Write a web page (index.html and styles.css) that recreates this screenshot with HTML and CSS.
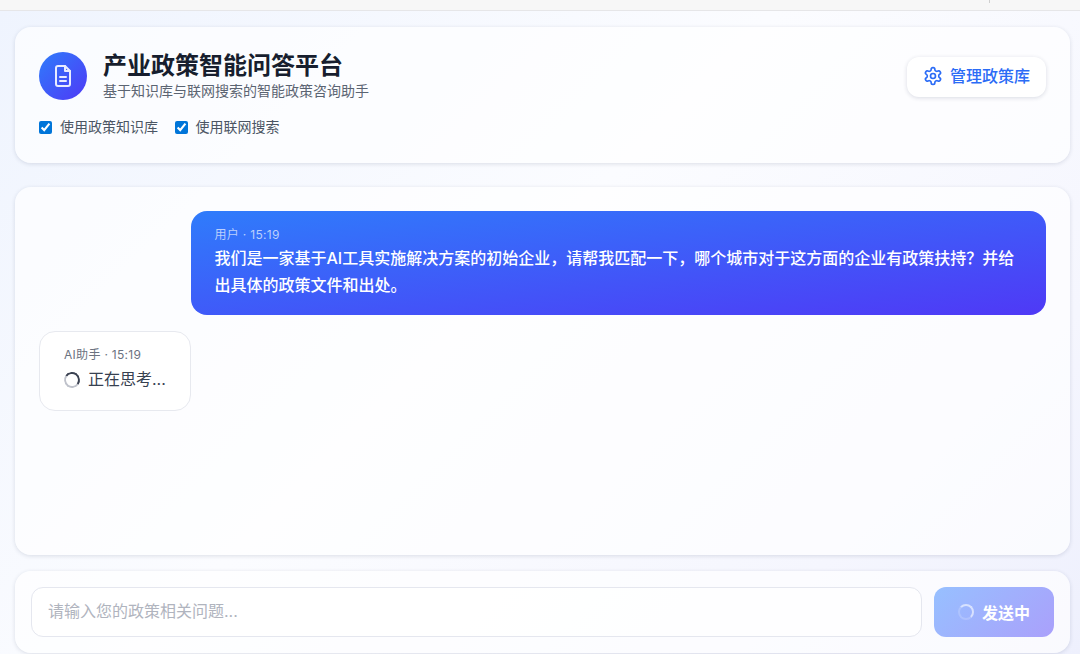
FILE: index.html
```html
<!DOCTYPE html>
<html lang="zh-CN">
<head>
<meta charset="utf-8">
<title>产业政策智能问答平台</title>
<link rel="stylesheet" href="styles.css">
</head>
<body>
<div class="browser-strip"><span class="strip-divider"></span></div>
<main class="page">
  <header class="card header">
    <div class="header-top">
      <div class="brand">
        <div class="logo">
          <svg width="24" height="24" viewBox="0 0 24 24" fill="none" stroke="#e9ecff" stroke-width="2" stroke-linecap="round" stroke-linejoin="round"><path d="M14 2H7a2 2 0 0 0-2 2v16a2 2 0 0 0 2 2h10a2 2 0 0 0 2-2V7z"/><path d="M14 2v5h5"/><path d="M9 13h6"/><path d="M9 17h6"/></svg>
        </div>
        <div>
          <h1 class="title">产业政策智能问答平台</h1>
          <p class="subtitle">基于知识库与联网搜索的智能政策咨询助手</p>
        </div>
      </div>
      <button class="manage-btn" type="button">
        <svg width="20" height="20" viewBox="0 0 24 24" fill="none" stroke="#2b6cf6" stroke-width="2" stroke-linecap="round" stroke-linejoin="round"><path d="M12.22 2h-.44a2 2 0 0 0-2 2v.18a2 2 0 0 1-1 1.73l-.43.25a2 2 0 0 1-2 0l-.15-.08a2 2 0 0 0-2.73.73l-.22.38a2 2 0 0 0 .73 2.73l.15.1a2 2 0 0 1 1 1.72v.51a2 2 0 0 1-1 1.74l-.15.09a2 2 0 0 0-.73 2.73l.22.38a2 2 0 0 0 2.73.73l.15-.08a2 2 0 0 1 2 0l.43.25a2 2 0 0 1 1 1.73V20a2 2 0 0 0 2 2h.44a2 2 0 0 0 2-2v-.18a2 2 0 0 1 1-1.73l.43-.25a2 2 0 0 1 2 0l.15.08a2 2 0 0 0 2.73-.73l.22-.39a2 2 0 0 0-.73-2.73l-.15-.08a2 2 0 0 1-1-1.74v-.5a2 2 0 0 1 1-1.74l.15-.09a2 2 0 0 0 .73-2.73l-.22-.38a2 2 0 0 0-2.73-.73l-.15.08a2 2 0 0 1-2 0l-.43-.25a2 2 0 0 1-1-1.73V4a2 2 0 0 0-2-2z"/><circle cx="12" cy="12" r="3"/></svg>
        <span>管理政策库</span>
      </button>
    </div>
    <div class="options">
      <label class="option"><input class="check" type="checkbox" checked>使用政策知识库</label>
      <label class="option"><input class="check" type="checkbox" checked>使用联网搜索</label>
    </div>
  </header>

  <section class="card chat">
    <div class="bubble bubble-user">
      <div class="meta">用户 · 15:19</div>
      <div class="bubble-text">我们是一家基于AI工具实施解决方案的初始企业，请帮我匹配一下，哪个城市对于这方面的企业有政策扶持？并给出具体的政策文件和出处。</div>
    </div>
    <div class="bubble bubble-ai">
      <div class="meta">AI助手 · 15:19</div>
      <div class="thinking"><span class="spinner spinner-dark"></span><span>正在思考...</span></div>
    </div>
  </section>

  <section class="card composer">
    <input class="composer-input" type="text" placeholder="请输入您的政策相关问题...">
    <button class="send-btn" type="button"><span class="spinner spinner-light"></span><span>发送中</span></button>
  </section>
</main>
</body>
</html>
```

FILE: styles.css
```css
* { box-sizing: border-box; }

html, body {
  margin: 0;
  height: 654px;
  overflow: hidden;
}

body {
  font-family: Inter, "Noto Sans CJK SC", sans-serif;
  color: #1f2937;
  background: #fff;
}

.browser-strip {
  height: 11px;
  background: #f7f7f7;
  border-bottom: 1px solid #e6e6e8;
  display: flex;
  justify-content: flex-end;
  padding-right: 90px;
}

.strip-divider {
  width: 1px;
  height: 3px;
  background: #cfcfcf;
}

.page {
  height: 643px;
  padding: 16px 10px 0 15px;
  display: flex;
  flex-direction: column;
  background: linear-gradient(135deg, #eff4fe 0%, #fbfcff 45%, #f5f6fe 80%, #eef0fd 100%);
}

.card {
  flex: none;
  background: rgba(255, 255, 255, 0.65);
  border-radius: 16px;
  box-shadow: 0 1px 4px rgba(30, 41, 80, 0.14);
}

.header {
  height: 136px;
  padding: 25px 24px 0;
}

.header-top {
  display: flex;
  justify-content: space-between;
  align-items: flex-start;
}

.brand {
  display: flex;
  gap: 16px;
}

.logo {
  width: 48px;
  height: 48px;
  border-radius: 50%;
  background: linear-gradient(135deg, #2f7cfb, #4f39f6);
  display: flex;
  align-items: center;
  justify-content: center;
}

.title {
  margin: 0;
  font-size: 24px;
  line-height: 28px;
  font-weight: 700;
  color: #171e2e;
}

.subtitle {
  margin: 1px 0 0;
  font-size: 14px;
  line-height: 20px;
  color: #5b6472;
}

.manage-btn {
  margin-top: 5px;
  width: 139px;
  height: 40px;
  padding: 0 0 2px;
  border: 0;
  border-radius: 12px;
  background: #fff;
  box-shadow: 0 1px 4px rgba(30, 41, 80, 0.16);
  display: flex;
  align-items: center;
  justify-content: center;
  gap: 7px;
  font: 500 16px/20px Inter, "Noto Sans CJK SC", sans-serif;
  color: #2b6cf6;
}

.options {
  margin-top: 16px;
  display: flex;
  gap: 16.5px;
}

.option {
  display: flex;
  align-items: center;
  gap: 8px;
  font-size: 14px;
  line-height: 20px;
  color: #4b5563;
}

.check {
  margin: 0;
  width: 13px;
  height: 13px;
  accent-color: #0075d9;
}

.chat {
  height: 368px;
  margin-top: 24px;
  padding: 24px;
  display: flex;
  flex-direction: column;
  align-items: flex-start;
  gap: 16px;
}

.bubble {
  border-radius: 16px;
  padding: 16px 24px;
}

.bubble-user {
  align-self: flex-end;
  width: 855.5px;
  height: 104px;
  padding-top: 17px;
  color: #fff;
  background: linear-gradient(to bottom right, #2f7cfb 0%, #4f39f6 100%);
}

.bubble-ai {
  width: 151.5px;
  height: 80px;
  background: rgba(255, 255, 255, 0.85);
  border: 1px solid #e7e9ef;
}

.meta {
  font-size: 12px;
  line-height: 14px;
  letter-spacing: 0.3px;
  color: #6b7280;
}

.bubble-user .meta {
  color: #bcd0fd;
}

.bubble-text {
  margin-top: 3px;
  font-size: 16px;
  font-weight: 500;
  line-height: 27px;
}

.thinking {
  margin-top: 4px;
  display: flex;
  align-items: center;
  gap: 8px;
  font-size: 16px;
  line-height: 27px;
  white-space: nowrap;
  color: #374151;
}

.spinner {
  width: 16px;
  height: 16px;
  border-radius: 50%;
  flex: none;
}

.spinner-dark {
  border: 2.5px solid #bfc2cb;
  border-top-color: #3b4252;
  border-right-color: #3b4252;
  transform: rotate(-10deg);
}

.spinner-light {
  border: 2.5px solid rgba(255, 255, 255, 0.3);
  border-top-color: #fff;
  border-right-color: #fff;
  opacity: 0.6;
}

.composer {
  height: 82px;
  margin-top: 16px;
  padding: 16px;
  display: flex;
  gap: 12px;
}

.composer-input {
  flex: 1;
  min-width: 0;
  height: 50px;
  padding: 0 16px 2px;
  border: 1px solid #e5e7ef;
  border-radius: 12px;
  background: rgba(255, 255, 255, 0.7);
  outline: 0;
  font: 400 16px Inter, "Noto Sans CJK SC", sans-serif;
}

.composer-input::placeholder {
  color: #b0b4be;
  opacity: 1;
}

.send-btn {
  width: 120px;
  height: 50px;
  border: 0;
  border-radius: 12px;
  background: linear-gradient(135deg, #97c0ff, #aaa0fb);
  display: flex;
  align-items: center;
  justify-content: center;
  gap: 8px;
  color: #fff;
  font: 700 16px Inter, "Noto Sans CJK SC", sans-serif;
}
```
